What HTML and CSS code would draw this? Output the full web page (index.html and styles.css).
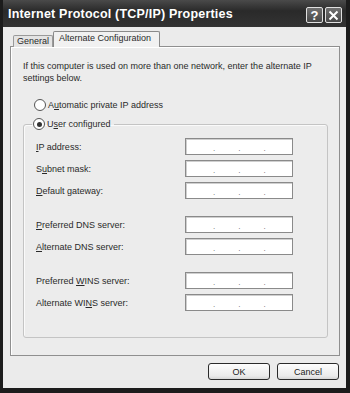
FILE: index.html
```html
<!DOCTYPE html>
<html lang="en">
<head>
    <meta charset="UTF-8">
    <meta name="viewport" content="width=device-width, initial-scale=1.0">
    <title>Internet Protocol (TCP/IP) Properties</title>
    <link rel="stylesheet" href="styles.css">
</head>
<body>
    <div class="window">
        <div class="titlebar">
            <span class="title">Internet Protocol (TCP/IP) Properties</span>
            <div class="caption-buttons">
                <div class="cap-btn">?</div>
                <div class="cap-btn">
                    <svg width="11" height="11" viewBox="0 0 11 11"><path d="M1.5 1.5 L9.5 9.5 M9.5 1.5 L1.5 9.5" stroke="#fff" stroke-width="2" fill="none"/></svg>
                </div>
            </div>
        </div>
        <div class="body">
            <div class="tabs">
                <div class="tab">General</div>
                <div class="tab active">Alternate Configuration</div>
            </div>
            <div class="panel">
                <p class="intro">If this computer is used on more than one network, enter the alternate IP settings below.</p>
                <div class="option"><span class="radio"></span><span>A<u>u</u>tomatic private IP address</span></div>
                <fieldset class="group">
                    <legend class="option"><span class="radio checked"></span><span>U<u>s</u>er configured</span></legend>
                    <div class="row"><label><u>I</u>P address:</label><div class="ip"><span></span>.<span></span>.<span></span>.<span></span></div></div>
                    <div class="row"><label>S<u>u</u>bnet mask:</label><div class="ip"><span></span>.<span></span>.<span></span>.<span></span></div></div>
                    <div class="row"><label><u>D</u>efault gateway:</label><div class="ip"><span></span>.<span></span>.<span></span>.<span></span></div></div>
                    <div class="row gap"><label><u>P</u>referred DNS server:</label><div class="ip"><span></span>.<span></span>.<span></span>.<span></span></div></div>
                    <div class="row"><label><u>A</u>lternate DNS server:</label><div class="ip"><span></span>.<span></span>.<span></span>.<span></span></div></div>
                    <div class="row gap"><label>Preferred <u>W</u>INS server:</label><div class="ip"><span></span>.<span></span>.<span></span>.<span></span></div></div>
                    <div class="row"><label>Alternate WI<u>N</u>S server:</label><div class="ip"><span></span>.<span></span>.<span></span>.<span></span></div></div>
                </fieldset>
            </div>
            <div class="footer">
                <button class="btn">OK</button>
                <button class="btn">Cancel</button>
            </div>
        </div>
    </div>
</body>
</html>
```

FILE: styles.css
```css
body {
    margin: 0;
    padding: 0;
    background: #fff;
    font-family: 'Liberation Sans', Arial, sans-serif;
    font-size: 9px;
    color: #2a2a2a;
}
.window {
    width: 350px;
    height: 393px;
    box-sizing: border-box;
    background: #ebebeb;
    border-left: 3px solid #1c1c1c;
    border-right: 4px solid #1c1c1c;
    border-bottom: 5px solid #1c1c1c;
    display: flex;
    flex-direction: column;
}
.titlebar {
    height: 27px;
    flex-shrink: 0;
    background: linear-gradient(#4a4a4a, #2a2a2a 40%, #333);
    display: flex;
    align-items: center;
    justify-content: space-between;
    padding: 0 4px 0 5px;
}
.title {
    color: #fff;
    font-weight: bold;
    font-size: 12.5px;
    letter-spacing: 0.2px;
    margin-top: 1px;
}
.caption-buttons {
    display: flex;
    gap: 2px;
    margin-top: 3px;
}
.cap-btn {
    width: 15px;
    height: 14px;
    border: 1px solid #e0e0e0;
    border-radius: 2px;
    background: linear-gradient(#707070, #484848);
    color: #fff;
    font-weight: bold;
    font-size: 13px;
    display: flex;
    align-items: center;
    justify-content: center;
}
.body {
    flex: 1;
    padding: 0 6px 0 7px;
    display: flex;
    flex-direction: column;
}
.tabs {
    display: flex;
    align-items: flex-end;
    height: 20px;
    padding-left: 3px;
    margin-bottom: -1px;
    position: relative;
    z-index: 1;
}
.tab {
    height: 11px;
    padding: 0 3px;
    line-height: 11px;
    border: 1px solid #9a9a9a;
    border-bottom: none;
    background: #e4e4e4;
    border-radius: 2px 2px 0 0;
}
.tab.active {
    height: 15px;
    line-height: 13px;
    padding: 0 8px 0 5px;
    background: #f1f1f1;
    border-color: #8a8a8a;
}
.panel {
    height: 310px;
    box-sizing: border-box;
    border: 1px solid #8f8f8f;
    background: #ececec;
    padding: 13px 10px 0 12px;
    box-shadow: inset 1px 1px 0 #fff;
}
.intro {
    margin: 0;
    line-height: 12px;
    width: 300px;
}
.option {
    display: flex;
    align-items: center;
    gap: 2px;
    line-height: 12px;
}
.panel > .option {
    margin: 15px 0 0 11px;
}
.radio {
    width: 10px;
    height: 10px;
    border: 1px solid #555;
    border-radius: 50%;
    background: #fff;
    position: relative;
}
.radio.checked::after {
    content: '';
    position: absolute;
    left: 2.5px;
    top: 2.5px;
    width: 5px;
    height: 5px;
    border-radius: 50%;
    background: #333;
}
.group {
    margin: 7px 0 0 0;
    padding: 3px 0 26px 12px;
    border: 1px solid #c4c4c4;
    border-radius: 3px;
    box-shadow: inset 1px 1px 0 #fafafa;
    width: 305px;
    box-sizing: border-box;
}
.group legend {
    padding: 0 3px 0 1px;
    margin-left: -4px;
}
.row {
    display: flex;
    align-items: center;
    height: 17px;
    margin-top: 5px;
}
.row.gap {
    margin-top: 17px;
}
.row label {
    width: 149px;
}
.ip {
    width: 108px;
    height: 17px;
    box-sizing: border-box;
    border: 1px solid #8a8a8a;
    box-shadow: inset 1px 1px 0 #cfcfcf;
    background: #fff;
    display: flex;
    align-items: center;
    padding-top: 4px;
    color: #666;
    font-size: 8px;
}
.ip span {
    width: 23px;
}
.ip span:first-child {
    width: 27px;
}
.footer {
    display: flex;
    justify-content: flex-end;
    gap: 7px;
    padding: 7px 1px 0 0;
}
.btn {
    width: 62px;
    height: 17px;
    padding: 0;
    font-family: 'Liberation Sans', Arial, sans-serif;
    font-size: 9px;
    color: #222;
    border: 1px solid #2a2a2a;
    border-radius: 3px;
    background: linear-gradient(#fdfdfd, #eaeaea 80%, #d6d6d6);
}
```
